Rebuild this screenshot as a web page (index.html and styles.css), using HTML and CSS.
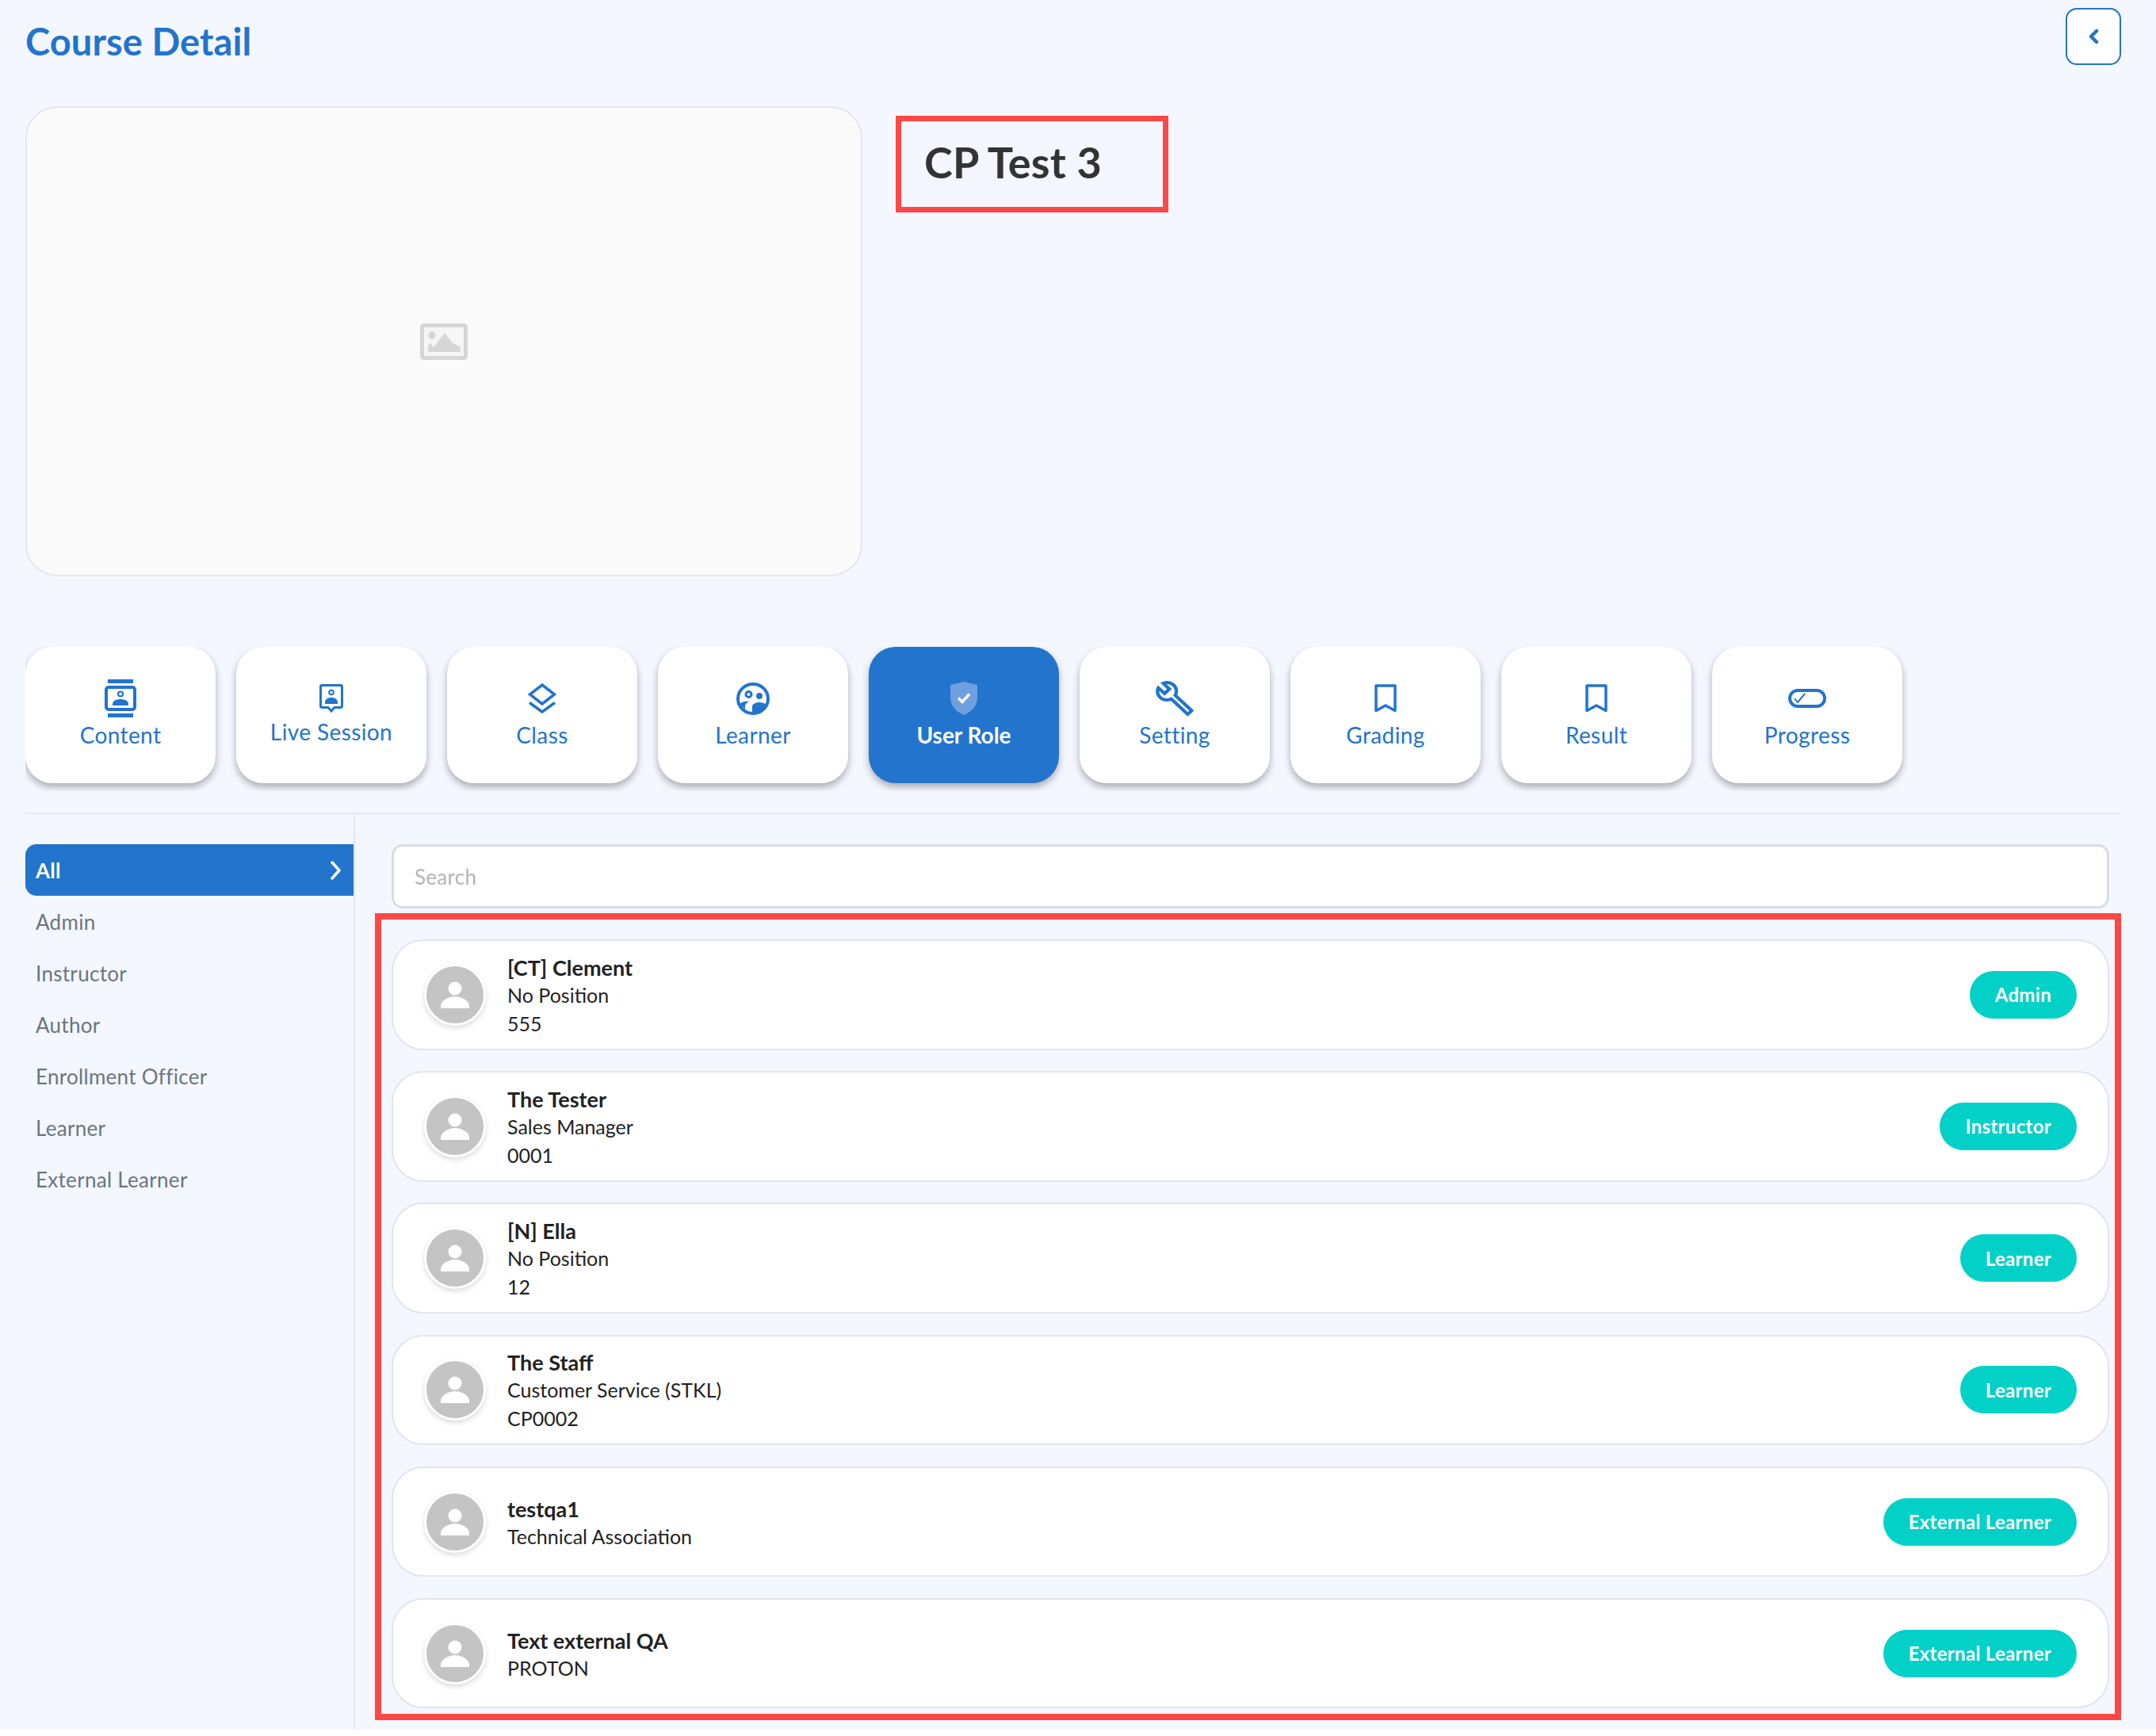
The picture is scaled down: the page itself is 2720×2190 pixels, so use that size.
FILE: index.html
```html
<!DOCTYPE html>
<html lang="en">
<head>
  <meta charset="UTF-8" />
  <meta name="viewport" content="width=device-width,initial-scale=1" />
  <title>Course Detail</title>
  <link rel="stylesheet" href="styles.css">
</head>
<body>
  <div class="page">
    <div class="header">
      <h1 class="page-title">Course Detail</h1>
      <button class="back-btn">
        <svg width="14" height="20" viewBox="0 0 14 20"><path d="M11 3 4 10l7 7" fill="none" stroke="#2274cc" stroke-width="4.5" stroke-linecap="round" stroke-linejoin="round"/></svg>
      </button>
    </div>

    <div class="overview">
      <div class="cover">
        <svg width="60" height="46" viewBox="0 0 60 46">
          <rect x="2.5" y="2.5" width="55" height="41" rx="2" fill="#f6f6f6" stroke="#d6d6d6" stroke-width="5"/>
          <ellipse cx="15" cy="15" rx="4.5" ry="5" fill="#d6d6d6"/>
          <path d="M10 36V29l3-5 4 6 10-13 4-5 4 5 5 7 11 6v6z" fill="#d6d6d6"/>
        </svg>
      </div>
      <div class="course-name"><h2>CP Test 3</h2></div>
    </div>

    <div class="tabs">
      <div class="tab">
        <div class="tab-icon">
          <svg width="40" height="48" viewBox="0 0 40 48">
            <rect x="4" y="0" width="32" height="5" fill="#2274cc"/>
            <rect x="4" y="43" width="32" height="5" fill="#2274cc"/>
            <rect x="2" y="10" width="36" height="28" rx="3" fill="none" stroke="#2274cc" stroke-width="4"/>
            <circle cx="20" cy="18.5" r="3" fill="none" stroke="#2274cc" stroke-width="2.2"/>
            <path d="M10 33v-2c0-4 5-6 10-6s10 2 10 6v2z" fill="#2274cc"/>
          </svg>
        </div>
        <div class="tab-label">Content</div>
      </div>
      <div class="tab tab-live">
        <div class="tab-icon">
          <svg width="30" height="36" viewBox="0 0 30 36">
            <path d="M3 1.5h24a1.5 1.5 0 0 1 1.5 1.5v25a1.5 1.5 0 0 1-1.500 1.500h-8L15 34l-4-4.500H3A1.500 1.500 0 0 1 1.500 28V3A1.500 1.500 0 0 1 3 1.500z" fill="none" stroke="#2274cc" stroke-width="3"/>
            <circle cx="15" cy="10.500" r="2.800" fill="none" stroke="#2274cc" stroke-width="2"/>
            <path d="M7 25v-2c0-4 4-6 8-6s8 2 8 6v2z" fill="#2274cc"/>
          </svg>
        </div>
        <div class="tab-label">Live Session</div>
      </div>
      <div class="tab">
        <div class="tab-icon">
          <svg width="36" height="38" viewBox="0 0 36 38">
            <path d="M18 2 33.500 14 18 26 2.500 14z" fill="none" stroke="#2274cc" stroke-width="3.500"/>
            <path d="M2 24.500 18 36l16-11.500" fill="none" stroke="#2274cc" stroke-width="3.500"/>
          </svg>
        </div>
        <div class="tab-label">Class</div>
      </div>
      <div class="tab">
        <div class="tab-icon">
          <svg width="42" height="41" viewBox="0 0 42 41">
            <ellipse cx="21" cy="20.500" rx="19" ry="18.500" fill="none" stroke="#2274cc" stroke-width="4"/>
            <circle cx="15.500" cy="15" r="3.500" fill="none" stroke="#2274cc" stroke-width="3"/>
            <circle cx="29" cy="17" r="4" fill="#2274cc"/>
            <path d="M4 27c3-3 8-4 12-3-4 2-5 4-5 6v4z" fill="#2274cc"/>
            <path d="M20 38V30c0-3 5-5 9-5 3 0 7 1 9 3-3 6-9 10-18 10z" fill="#2274cc"/>
          </svg>
        </div>
        <div class="tab-label">Learner</div>
      </div>
      <div class="tab tab-active">
        <div class="tab-icon">
          <svg width="34" height="42" viewBox="0 0 34 42">
            <path d="M17 0 34 4v16c0 10-7 18-17 22C7 38 0 30 0 20V4z" fill="#6f9fdf"/>
            <path d="M10 20.500l5 5 9-10" fill="none" stroke="#fff" stroke-width="3.500"/>
          </svg>
        </div>
        <div class="tab-label">User Role</div>
      </div>
      <div class="tab">
        <div class="tab-icon">
          <svg width="52" height="48" viewBox="0 0 24 24" preserveAspectRatio="none">
            <path fill="#2274cc" d="M22.610 18.990l-9.080-9.080c.93-2.340.45-5.100-1.440-7C9.790.610 6.210.400 3.660 2.260L7.500 6.110 6.080 7.520 2.250 3.690C.39 6.230.6 9.820 2.900 12.110c1.860 1.860 4.570 2.350 6.890 1.480l9.110 9.110c.39.39 1.020.39 1.410 0l2.300-2.300c.5-.38.5-1.020 0-1.410zm-3 1.600l-9.460-9.460c-.61.45-1.290.72-2 .82-1.360.2-2.790-.21-3.830-1.250C3.370 9.760 2.930 8.500 3 7.260l3.090 3.090 4.240-4.240-3.090-3.090c1.240-.07 2.490.37 3.440 1.310 1.080 1.080 1.490 2.570 1.240 3.960-.12.71-.42 1.370-.88 1.960l9.450 9.450-.88.88z"/>
          </svg>
        </div>
        <div class="tab-label">Setting</div>
      </div>
      <div class="tab">
        <div class="tab-icon">
          <svg width="28" height="37" viewBox="0 0 28 37"><path d="M2 2h24v31.500l-12-6.500-12 6.500z" fill="none" stroke="#2274cc" stroke-width="3.500" stroke-linejoin="round"/></svg>
        </div>
        <div class="tab-label">Grading</div>
      </div>
      <div class="tab">
        <div class="tab-icon">
          <svg width="28" height="37" viewBox="0 0 28 37"><path d="M2 2h24v31.500l-12-6.500-12 6.500z" fill="none" stroke="#2274cc" stroke-width="3.500" stroke-linejoin="round"/></svg>
        </div>
        <div class="tab-label">Result</div>
      </div>
      <div class="tab">
        <div class="tab-icon">
          <svg width="48" height="24" viewBox="0 0 48 24">
            <rect x="2" y="2" width="44" height="20" rx="10" fill="none" stroke="#2274cc" stroke-width="4"/>
            <path d="M8 12l4 5 9-11" fill="none" stroke="#2274cc" stroke-width="2"/>
          </svg>
        </div>
        <div class="tab-label">Progress</div>
      </div>
    </div>

    <div class="panel">
      <div class="side">
        <div class="side-item side-active">
          <span>All</span>
          <svg width="16" height="24" viewBox="0 0 16 24"><path d="M3 2l9 10-9 10" fill="none" stroke="#fff" stroke-width="3.500" stroke-linecap="round" stroke-linejoin="round"/></svg>
        </div>
        <div class="side-item">Admin</div>
        <div class="side-item">Instructor</div>
        <div class="side-item">Author</div>
        <div class="side-item">Enrollment Officer</div>
        <div class="side-item">Learner</div>
        <div class="side-item">External Learner</div>
      </div>

      <div class="main">
        <div class="search">Search</div>
        <div class="members">
          <div class="member">
            <div class="avatar"><svg width="72" height="72" viewBox="0 0 72 72"><circle cx="36" cy="28" r="8.500" fill="#fff"/><path d="M18 53v-3c0-7 10-12 18-12s18 5 18 12v3z" fill="#fff"/></svg></div>
            <div class="info">
              <div class="name">[CT] Clement</div>
              <div class="meta">No Position</div>
              <div class="meta">555</div>
            </div>
            <div class="role">Admin</div>
          </div>
          <div class="member">
            <div class="avatar"><svg width="72" height="72" viewBox="0 0 72 72"><circle cx="36" cy="28" r="8.500" fill="#fff"/><path d="M18 53v-3c0-7 10-12 18-12s18 5 18 12v3z" fill="#fff"/></svg></div>
            <div class="info">
              <div class="name">The Tester</div>
              <div class="meta">Sales Manager</div>
              <div class="meta">0001</div>
            </div>
            <div class="role">Instructor</div>
          </div>
          <div class="member">
            <div class="avatar"><svg width="72" height="72" viewBox="0 0 72 72"><circle cx="36" cy="28" r="8.500" fill="#fff"/><path d="M18 53v-3c0-7 10-12 18-12s18 5 18 12v3z" fill="#fff"/></svg></div>
            <div class="info">
              <div class="name">[N] Ella</div>
              <div class="meta">No Position</div>
              <div class="meta">12</div>
            </div>
            <div class="role">Learner</div>
          </div>
          <div class="member">
            <div class="avatar"><svg width="72" height="72" viewBox="0 0 72 72"><circle cx="36" cy="28" r="8.500" fill="#fff"/><path d="M18 53v-3c0-7 10-12 18-12s18 5 18 12v3z" fill="#fff"/></svg></div>
            <div class="info">
              <div class="name">The Staff</div>
              <div class="meta">Customer Service (STKL)</div>
              <div class="meta">CP0002</div>
            </div>
            <div class="role">Learner</div>
          </div>
          <div class="member">
            <div class="avatar"><svg width="72" height="72" viewBox="0 0 72 72"><circle cx="36" cy="28" r="8.500" fill="#fff"/><path d="M18 53v-3c0-7 10-12 18-12s18 5 18 12v3z" fill="#fff"/></svg></div>
            <div class="info">
              <div class="name">testqa1</div>
              <div class="meta">Technical Association</div>
            </div>
            <div class="role">External Learner</div>
          </div>
          <div class="member">
            <div class="avatar"><svg width="72" height="72" viewBox="0 0 72 72"><circle cx="36" cy="28" r="8.500" fill="#fff"/><path d="M18 53v-3c0-7 10-12 18-12s18 5 18 12v3z" fill="#fff"/></svg></div>
            <div class="info">
              <div class="name">Text external QA</div>
              <div class="meta">PROTON</div>
            </div>
            <div class="role">External Learner</div>
          </div>
        </div>
      </div>
    </div>
  </div>
</body>
</html>
```

FILE: styles.css
```css
:root {
  --blue: #2274cc;
  --bg: #f4f7ff;
  --line: #e3e6ea;
  --red: #ff4747;
  --teal: #03d1c8;
}
* { box-sizing: border-box; margin: 0; padding: 0 }
html, body { background: #fff }
body { font-family: Lato, sans-serif; color: #222 }

.page {
  height: 2182px;
  overflow: hidden;
  padding: 10px 44px 0 32px;
  background: var(--bg);
}

.header { display: flex; justify-content: space-between; align-items: flex-start }
.page-title { margin-top: 12px; font-size: 47px; line-height: 60px; font-weight: 700; letter-spacing: 0.1px; color: var(--blue) }
.back-btn {
  display: flex; align-items: center; justify-content: center;
  width: 70px; height: 72px;
  background: #fff; border: 2.5px solid var(--blue); border-radius: 14px;
}

.overview { display: flex; align-items: flex-start; gap: 42px; margin-top: 52px }
.cover {
  display: flex; align-items: center; justify-content: center;
  width: 1056px; height: 593px;
  background: #fafafa; border: 2px solid var(--line); border-radius: 40px;
}
.course-name {
  width: 344px; height: 122px; margin-top: 12px; padding: 0 0 6px 29px;
  display: flex; align-items: center;
  border: 7px solid var(--red);
}
.course-name h2 { font-size: 54px; font-weight: 700; letter-spacing: 0.2px; color: #333 }

.tabs { display: flex; gap: 26px; margin-top: 89px; height: 182px; overflow: hidden }
.tab {
  width: 240px; height: 172px; padding-top: 41px;
  background: #fff; border-radius: 34px;
  box-shadow: 0 5px 10px rgba(0,0,0,0.3);
  color: var(--blue); text-align: center;
}
.tab-icon { display: flex; align-items: center; justify-content: center; height: 48px }
.tab-label { margin-top: 6px; font-size: 28px; line-height: 32px; letter-spacing: 0.4px }
.tab-live .tab-label { margin-top: 2px }
.tab-active { background: var(--blue); color: #fff }
.tab-active .tab-label { font-weight: 700; letter-spacing: 0 }

.panel { display: flex; margin-top: 27px; border-top: 2px solid var(--line); height: 1160px }
.side { width: 416px; padding-top: 38px; border-right: 2px solid var(--line); flex: none }
.side-item { height: 65px; padding: 0 14px 0 13px; display: flex; align-items: center; justify-content: space-between; font-size: 26px; letter-spacing: 0.3px; color: #6b7580 }
.side-active { background: var(--blue); color: #fff; font-weight: 700; border-radius: 14px 0 0 14px }

.main { flex: 1; padding-top: 38px }
.search {
  height: 81px; margin: 0 15px 0 46px; padding: 0 26px;
  display: flex; align-items: center;
  background: #fff; border: 3px solid #d6dee0; border-radius: 14px;
  font-size: 26px; letter-spacing: 0.3px; color: #b5b5b5;
}
.members {
  display: flex; flex-direction: column; gap: 26.7px;
  height: 1018px; margin: 6px 0 0 25px; padding: 25px 7px 0 13px;
  border: 8px solid var(--red);
}
.member {
  display: flex; align-items: center;
  height: 139.5px; padding: 0 39px 0 39px;
  background: #fff; border: 2px solid #e0e6ec; border-radius: 40px;
}
.avatar {
  width: 78px; height: 78px; flex: none;
  display: flex; align-items: center; justify-content: center;
  background: #c4c4c4; border: 3px solid #fff; border-radius: 50%;
  box-shadow: 0 3px 6px rgba(0,0,0,0.14);
}
.info { flex: 1; margin-left: 27px }
.name { margin: 2px 0 -2px; font-size: 27px; line-height: 36px; font-weight: 700; color: #222 }
.meta { font-size: 25px; line-height: 36px; color: #222 }
.role {
  height: 60px; padding: 0 32px;
  display: flex; align-items: center;
  background: var(--teal); border-radius: 30px;
  font-size: 24px; font-weight: 700; letter-spacing: 0.3px; color: #fff;
}
```
